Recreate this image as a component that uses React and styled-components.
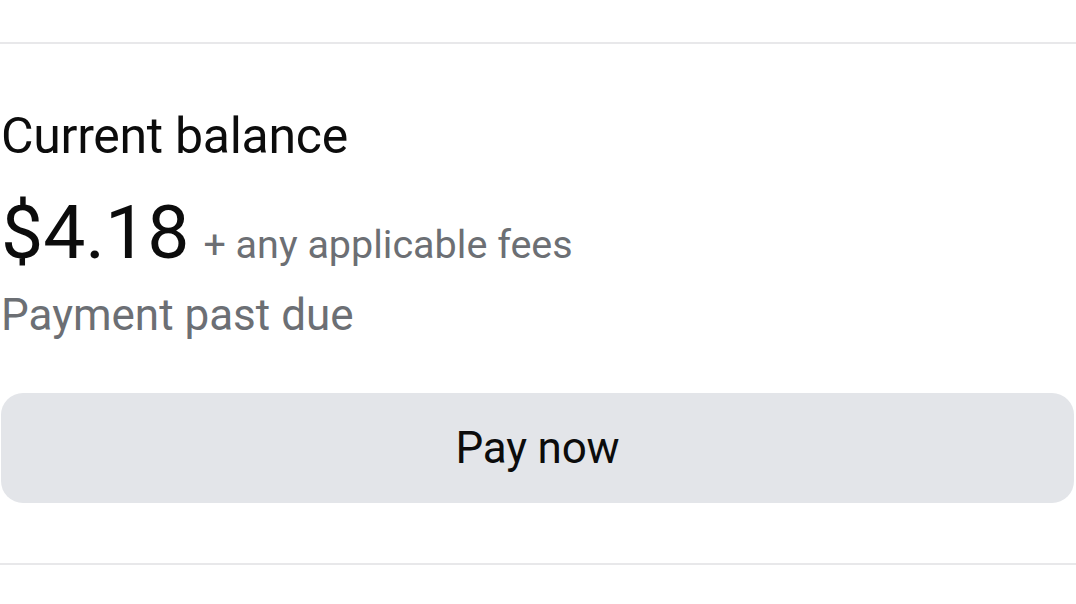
import React from 'react';
import styled, { createGlobalStyle } from 'styled-components';

const GlobalStyle = createGlobalStyle`
  html, body {
    margin: 0;
    padding: 0;
    background: #fff;
  }
  body {
    font-family: Roboto, "Liberation Sans", Arial, sans-serif;
    color: #0c0c0c;
  }
`

const Page = styled.div`
  width: 1076px;
  height: 604px;
  padding-top: 42px;
  box-sizing: border-box;
  display: flex;
  flex-direction: column;
`

const Divider = styled.hr`
  margin: 0;
  border: 0;
  height: 2px;
  background: #e8e8ea;
`

const Section = styled.section`
  display: flex;
  flex-direction: column;
  padding: 63px 2px 60px 1px;
`

const Label = styled.h2`
  margin: 0;
  font-size: 50px;
  font-weight: 400;
  line-height: 58px;
  letter-spacing: -0.3px;
`

const AmountRow = styled.div`
  display: flex;
  align-items: baseline;
  margin-top: 27px;
  height: 80px;
`

const Amount = styled.span`
  font-size: 75px;
  line-height: 80px;
  font-weight: 400;
`

const Fees = styled.span`
  margin-left: 14px;
  font-size: 39.5px;
  color: #6c6f74;
`

const Status = styled.p`
  margin: 17px 0 0;
  font-size: 44px;
  line-height: 52px;
  color: #6c6f74;
`

const PayButton = styled.button`
  margin-top: 52px;
  height: 110px;
  border: 0;
  border-radius: 22px;
  background: #e3e5e9;
  font-family: inherit;
  font-size: 44px;
  color: #0c0c0c;
  letter-spacing: -0.2px;
  cursor: pointer;
`

export default function App() {
  return (
    <>
      <GlobalStyle />
      <Page>
        <Divider />
        <Section>
          <Label>Current balance</Label>
          <AmountRow>
            <Amount>$4.18</Amount>
            <Fees>+ any applicable fees</Fees>
          </AmountRow>
          <Status>Payment past due</Status>
          <PayButton type='button'>Pay now</PayButton>
        </Section>
        <Divider />
      </Page>
    </>
  )
}
